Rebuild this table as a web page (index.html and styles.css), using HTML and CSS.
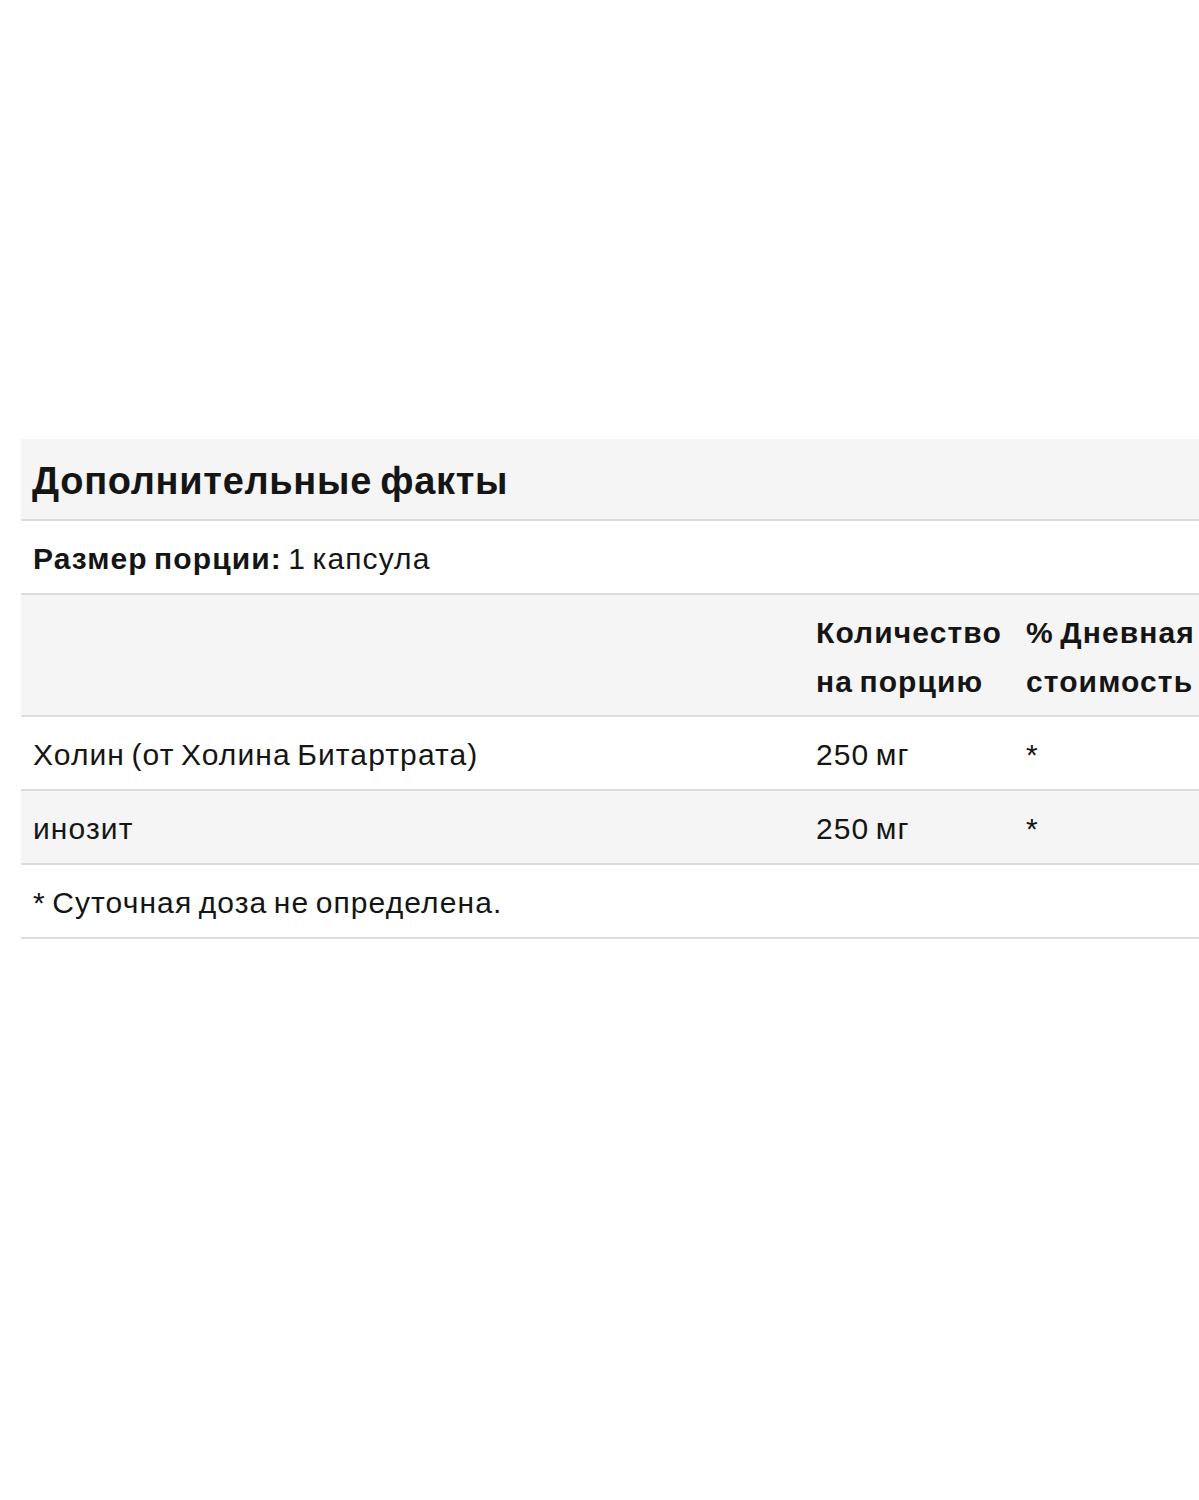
FILE: index.html
```html
<!DOCTYPE html>
<html lang="ru">
<head>
<meta charset="utf-8">
<link rel="stylesheet" href="styles.css">
</head>
<body>
<div class="wrap">
<table class="facts">
  <colgroup>
    <col class="c1"><col class="c2"><col class="c3">
  </colgroup>
  <thead>
    <tr class="title"><th colspan="3">Дополнительные факты</th></tr>
  </thead>
  <tbody>
    <tr class="serving"><td colspan="3"><b>Размер порции:</b> 1 капсула</td></tr>
    <tr class="head alt"><td></td><td class="b">Количество<br>на порцию</td><td class="b">% Дневная<br>стоимость</td></tr>
    <tr><td>Холин (от Холина Битартрата)</td><td>250 мг</td><td>*</td></tr>
    <tr class="alt"><td>инозит</td><td>250 мг</td><td>*</td></tr>
    <tr><td colspan="3">* Суточная доза не определена.</td></tr>
  </tbody>
</table>
</div>
</body>
</html>
```
FILE: styles.css
```css
html, body {
  margin: 0;
  padding: 0;
  background: #fff;
  overflow: hidden;
}
.wrap {
  padding-top: 439px;
  padding-left: 21px;
  width: 1300px;
}
.facts {
  border-collapse: collapse;
  width: 1240px;
  font-family: "Liberation Sans", Arial, sans-serif;
  color: #151515;
  font-size: 30px;
  letter-spacing: 1.1px;
  word-spacing: -3px;
}
.c1 { width: 783px; }
.c2 { width: 210px; }
.c3 { width: 247px; }
.facts th, .facts td {
  text-align: left;
  vertical-align: top;
  padding: 14px 12px 10px 12px;
  line-height: 48px;
  border-bottom: 2px solid #dcdcdc;
}
.title th {
  background: #f5f5f5;
  font-size: 38px;
  font-weight: bold;
  letter-spacing: 0.7px;
  line-height: 56px;
  padding: 14px 11px 10px 11px;
}
.head td {
  line-height: 49px;
  padding: 13px 12px 9px 12px;
}
.alt td { background: #f5f5f5; }
.b, b { font-weight: bold; letter-spacing: 1.1px; }
```
